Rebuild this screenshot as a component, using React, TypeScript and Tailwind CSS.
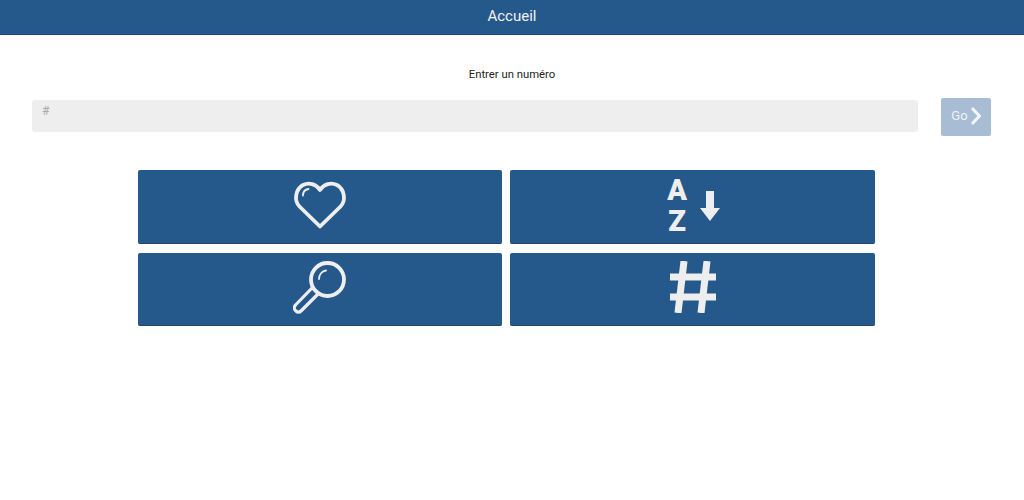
import React from "react";

const font = { fontFamily: "Roboto, sans-serif" };

function Heart() {
  return (
    <svg width="54" height="50" viewBox="0 0 54 50" fill="none" stroke="#eeeeee" strokeLinecap="round" strokeLinejoin="round" className="mt-[-3px]">
      <path d="M27 46.5 L6.5 26.5 C1 21 2 9.5 10 5 C16 2 23 4 27 10 C31 4 38 2 44 5 C52 9.5 53 21 47.5 26.5 Z" strokeWidth="3.8" />
      <path d="M10 15.5 C10 11.5 12.5 9.5 15.5 9" strokeWidth="1.8" />
    </svg>
  );
}

function Magnifier() {
  return (
    <svg width="54" height="54" viewBox="0 0 54 54" fill="none" stroke="#eeeeee" strokeLinecap="round" strokeLinejoin="round" className="mt-[-3.5px]">
      <circle cx="34.5" cy="19.5" r="16.5" strokeWidth="3.8" />
      <path d="M23 31 L19.5 27.5 L2.5 45 C0.5 47.5 1 49.5 3 51 C4.5 52.5 6.5 52.5 8.5 50.5 L25.5 33.5 Z" strokeWidth="3.2" />
      <path d="M26 19 C26 14.5 29 11 33 10.5" strokeWidth="1.8" />
    </svg>
  );
}

function SortArrow() {
  return (
    <svg width="20" height="30" viewBox="0 0 20 30" fill="#eeeeee">
      <path d="M6 0 H14 V17 H20 L10 30 L0 17 H6 Z" />
    </svg>
  );
}

function Hash() {
  return (
    <svg width="46" height="52" viewBox="0 0 46 52" fill="none" stroke="#eeeeee" strokeWidth="7" className="mt-[-3.5px]">
      <path d="M14 0 L8 52" />
      <path d="M37 0 L31 52" />
      <path d="M0 16 H46" />
      <path d="M0 36 H46" />
    </svg>
  );
}

function Tile({ children }: { children: React.ReactNode }) {
  return (
    <button className="flex h-[73.5px] items-center justify-center rounded-[2px] border-b border-[#1d4670] bg-[#25598b]">
      {children}
    </button>
  );
}

export default function App() {
  return (
    <div className="min-h-[500px] bg-white" style={font}>
      <header className="flex h-[34.5px] items-center justify-center border-b border-[#1d4670] bg-[#25598b] pb-[1px] text-[15px] text-[#f2f2f2]">
        Accueil
      </header>

      <p className="mt-[33.5px] text-center text-[11.3px] leading-[14px] text-[#222222]">Entrer un numéro</p>

      <div className="mt-[16px] flex items-start gap-[23px] pl-[32px] pr-[33px]">
        <div className="mt-[2px] h-[32px] flex-1 rounded-[3px] bg-[#eeeeee] px-[10px] py-[3px] text-[12px] leading-[16px] text-[#aaaaaa]">
          #
        </div>
        <button className="flex h-[38px] w-[50px] items-center justify-center gap-[3px] rounded-[2px] bg-[#a8bdd3] pb-[2px] text-[13px] text-[#f0f3f7]">
          Go
          <svg width="10" height="18" viewBox="0 0 10 18" fill="none" stroke="#f4f6f9" strokeWidth="3">
            <path d="M1 1 L8.5 9 L1 17" />
          </svg>
        </button>
      </div>

      <div className="ml-[137.5px] mt-[34px] grid w-[737.5px] grid-cols-2 gap-x-[8px] gap-y-[9px]">
        <Tile>
          <Heart />
        </Tile>
        <Tile>
          <div className="flex items-center gap-[13px] pl-[2px]">
            <div className="mt-[-1px] flex flex-col items-center text-[29px] font-black leading-[31px] text-[#eeeeee]">
              <span>A</span>
              <span>Z</span>
            </div>
            <SortArrow />
          </div>
        </Tile>
        <Tile>
          <Magnifier />
        </Tile>
        <Tile>
          <Hash />
        </Tile>
      </div>
    </div>
  );
}
